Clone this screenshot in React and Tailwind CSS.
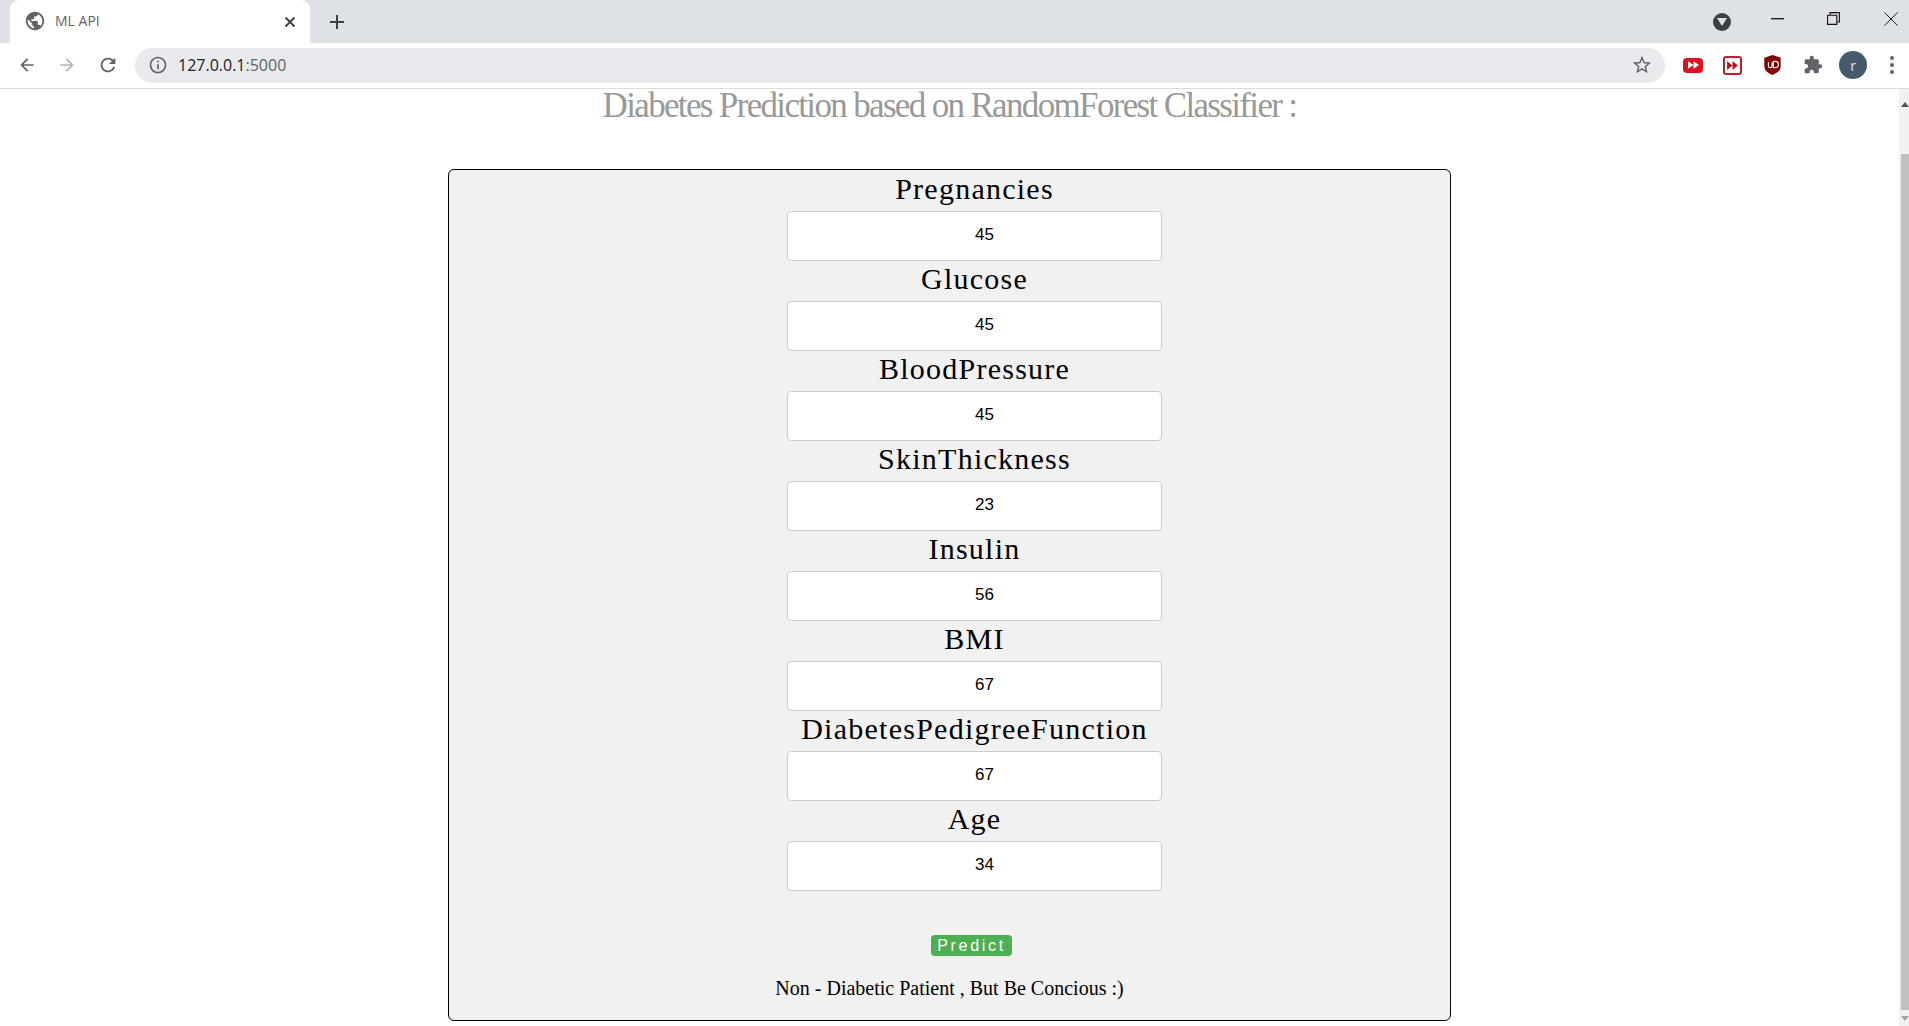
const rows = [
  ["Pregnancies", "45"],
  ["Glucose", "45"],
  ["BloodPressure", "45"],
  ["SkinThickness", "23"],
  ["Insulin", "56"],
  ["BMI", "67"],
  ["DiabetesPedigreeFunction", "67"],
  ["Age", "34"],
];

const serif = "font-['Liberation_Serif',serif]";

function Ms({ d, className, fill = "#5f6368" }) {
  return (
    <svg viewBox="0 0 24 24" className={className} fill={fill}>
      <path d={d} />
    </svg>
  );
}

export default function App() {
  return (
    <div className="h-screen w-screen overflow-hidden flex flex-col bg-white">
      {/* tab strip */}
      <div className="h-[43px] bg-[#dee1e6] flex items-end pl-[10px] shrink-0">
        <div className="h-[43px] w-[300px] bg-white rounded-t-[9px] flex items-center pl-[16px] pr-[14px]">
          <Ms className="w-[22px] h-[22px] -ml-[2px] -mt-[1px]" d="M12 2C6.48 2 2 6.48 2 12s4.48 10 10 10 10-4.48 10-10S17.52 2 12 2zm-1 17.93c-3.95-.49-7-3.85-7-7.93 0-.62.08-1.21.21-1.79L9 15v1c0 1.1.9 2 2 2v1.93zm6.9-2.54c-.26-.81-1-1.39-1.9-1.39h-1v-3c0-.55-.45-1-1-1H8v-2h2c.55 0 1-.45 1-1V7h2c1.1 0 2-.9 2-2v-.41c2.93 1.19 5 4.06 5 7.41 0 2.08-.8 3.97-2.1 5.39z" />
          <span className="ml-[9px] -mt-[2px] flex-1 text-[14px] text-[#5f6368] font-['Open_Sans',sans-serif]">ML API</span>
          <svg viewBox="0 0 12 12" className="w-[12px] h-[12px]" stroke="#3c4043" strokeWidth="1.9" fill="none">
            <path d="M1.5 1.5l9 9M10.5 1.5l-9 9" />
          </svg>
        </div>
        <div className="h-[43px] flex items-center ml-[20px]">
          <svg viewBox="0 0 14 14" className="w-[14px] h-[14px]" stroke="#3c4043" strokeWidth="2" fill="none">
            <path d="M7 0v14M0 7h14" />
          </svg>
        </div>
        <div className="flex-1 h-[43px] flex items-center justify-end">
          <div className="w-[18px] h-[18px] rounded-full bg-[#3c4043] flex items-center justify-center">
            <svg viewBox="0 0 10 8" className="w-[10px] h-[8px]" fill="#dee1e6"><path d="M0 0h10L5 8z" /></svg>
          </div>
          <svg viewBox="0 0 14 2" className="w-[13px] h-[2px] ml-[40px] -mt-[6px]" fill="#111"><path d="M0 0h14v1.4H0z" /></svg>
          <svg viewBox="0 0 13 13" className="w-[13px] h-[13px] ml-[43px] -mt-[6px]" fill="none" stroke="#111" strokeWidth="1.1">
            <path d="M.6 3.2h9.2v9.2H.6zM3 3V.6h9.4V10H10" />
          </svg>
          <svg viewBox="0 0 14 14" className="w-[14px] h-[14px] ml-[44px] mr-[11px] -mt-[6px]" fill="none" stroke="#222" strokeWidth="1">
            <path d="M.5.5l13 13M13.5.5l-13 13" />
          </svg>
        </div>
      </div>

      {/* toolbar */}
      <div className="h-[46px] bg-white border-b border-[#dadce0] flex items-center shrink-0 pl-[17px] pb-[1px]">
        <Ms className="w-[20px] h-[20px] mr-[20px]" d="M20 11H7.83l5.59-5.59L12 4l-8 8 8 8 1.41-1.41L7.83 13H20v-2z" />
        <Ms className="w-[20px] h-[20px] mr-[20px]" fill="#b3b6ba" d="M12 4l-1.41 1.41L16.17 11H4v2h12.17l-5.58 5.59L12 20l8-8z" />
        <Ms className="w-[22px] h-[22px] mr-[16px]" d="M17.65 6.35C16.2 4.9 14.21 4 12 4c-4.42 0-7.99 3.58-7.99 8s3.57 8 7.99 8c3.73 0 6.84-2.55 7.73-6h-2.08c-.82 2.33-3.04 4-5.65 4-3.31 0-6-2.69-6-6s2.69-6 6-6c1.66 0 3.14.69 4.22 1.78L13 11h7V4l-2.35 2.35z" />
        <div className="w-[1530px] h-[35px] rounded-full bg-[#e8eaed] flex items-center pl-[13px] pr-[13px] shrink-0">
          <Ms className="w-[20px] h-[20px]" d="M11 7h2v2h-2zm0 4h2v6h-2zm1-9C6.48 2 2 6.48 2 12s4.48 10 10 10 10-4.48 10-10S17.52 2 12 2zm0 18c-4.41 0-8-3.59-8-8s3.59-8 8-8 8 3.59 8 8-3.59 8-8 8z" />
          <span className="ml-[10px] flex-1 text-[16px] text-[#202124] font-['Open_Sans',sans-serif] tracking-[0px]">
            127.0.0.1<span className="text-[#5f6368]">:5000</span>
          </span>
          <Ms className="w-[22px] h-[22px] -mr-[1px]" d="M22 9.24l-7.19-.62L12 2 9.19 8.63 2 9.24l5.46 4.73L5.82 21 12 17.27 18.18 21l-1.63-7.03L22 9.24zM12 15.4l-3.76 2.27 1-4.28-3.32-2.88 4.38-.38L12 6.1l1.71 4.04 4.38.38-3.32 2.88 1 4.28L12 15.4z" />
        </div>
        <div className="ml-[18px] w-[20px] h-[15px] rounded-[4px] bg-[#e0101f] flex items-center justify-center shrink-0">
          <svg viewBox="0 0 12 8" className="w-[11px] h-[8px]" fill="#fff"><path d="M0 0l6 4-6 4zM6 0l6 4-6 4z" /></svg>
        </div>
        <div className="ml-[20px] w-[19px] h-[19px] rounded-[3px] border-2 border-[#c0202a] bg-white flex items-center justify-center shrink-0">
          <svg viewBox="0 0 12 10" className="w-[11px] h-[9px]" fill="#b3151f"><path d="M0 0l6 5-6 5zM6 0l6 5-6 5z" /></svg>
        </div>
        <svg viewBox="0 0 20 22" className="ml-[21px] w-[19px] h-[20px] shrink-0">
          <path d="M10 0l9 3v9c0 5-4 8-9 10C5 20 1 17 1 12V3z" fill="#800000" />
          <path d="M5.5 8v4a2 2 0 0 0 4 0V8M11 7v7h2a3.5 3.5 0 0 0 0-7z" fill="none" stroke="#fff" strokeWidth="1.3" />
        </svg>
        <Ms className="ml-[21px] w-[20px] h-[20px] shrink-0" d="M20.5 11H19V7c0-1.1-.9-2-2-2h-4V3.5C13 2.12 11.88 1 10.5 1S8 2.12 8 3.5V5H4c-1.1 0-1.99.9-1.99 2v3.8H3.5c1.49 0 2.7 1.21 2.7 2.7s-1.21 2.7-2.7 2.7H2V20c0 1.1.9 2 2 2h3.8v-1.5c0-1.49 1.21-2.7 2.7-2.7 1.49 0 2.7 1.21 2.7 2.7V22H17c1.1 0 2-.9 2-2v-4h1.5c1.38 0 2.5-1.12 2.5-2.5S21.88 11 20.5 11z" />
        <div className="ml-[16px] w-[28px] h-[28px] rounded-full bg-[#455a6a] text-[#e8eaed] flex items-center justify-center text-[14px] font-['Open_Sans',sans-serif] shrink-0">r</div>
        <div className="ml-[23px] flex flex-col gap-[3px] shrink-0">
          <span className="w-[4px] h-[4px] rounded-full bg-[#5f6368]" />
          <span className="w-[4px] h-[4px] rounded-full bg-[#5f6368]" />
          <span className="w-[4px] h-[4px] rounded-full bg-[#5f6368]" />
        </div>
      </div>

      {/* viewport */}
      <div className="flex-1 flex min-h-0">
        <main className={`flex-1 min-w-0 ${serif}`}>
          <h1 className="text-center text-[#999999] text-[35px] leading-[35px] tracking-[-1.66px] font-normal mt-[-1px] h-[81px]">
            Diabetes Prediction based on RandomForest Classifier :
          </h1>
          <div className="w-[1003px] h-[852px] mx-auto bg-[#f1f1f1] border border-black rounded-[6px] flex flex-col items-center">
            <div className="flex flex-col items-center pl-[50px]">
              {rows.map(([label, value]) => (
                <div key={label} className="flex flex-col items-center">
                  <label className="h-[41px] leading-[38px] text-[30px] tracking-[1.25px] text-black whitespace-nowrap">{label}</label>
                  <input
                    readOnly
                    value={value}
                    className="block w-[375px] h-[50px] mb-[-1px] bg-white border border-[#cccccc] rounded-[4px] pl-[20px] text-center text-[17px] text-black font-['Liberation_Sans',sans-serif] pb-[2px]"
                  />
                </div>
              ))}
            </div>
            <button className="mt-[45px] ml-[44px] w-[81px] h-[21px] rounded-[4px] bg-[#4caf50] text-white text-[16px] leading-[22px] tracking-[2.7px] font-['Liberation_Sans',sans-serif]">
              Predict
            </button>
            <p className="mt-[20px] text-[20px] leading-[24px] text-black">Non - Diabetic Patient , But Be Concious :)</p>
          </div>
        </main>
        <div className="w-[10px] bg-[#f1f1f1] flex flex-col shrink-0 pl-[2px]">
          <div className="h-[65px] pt-[13px]">
            <svg viewBox="0 0 8 5" className="w-[8px] h-[5px]" fill="#505050"><path d="M0 5l4-5 4 5z" /></svg>
          </div>
          <div className="flex-1 bg-[#c1c1c1]" />
          <div className="h-[16px] pt-[6px]">
            <svg viewBox="0 0 8 5" className="w-[8px] h-[5px]" fill="#a3a3a3"><path d="M0 0l4 5 4-5z" /></svg>
          </div>
        </div>
      </div>
    </div>
  );
}
